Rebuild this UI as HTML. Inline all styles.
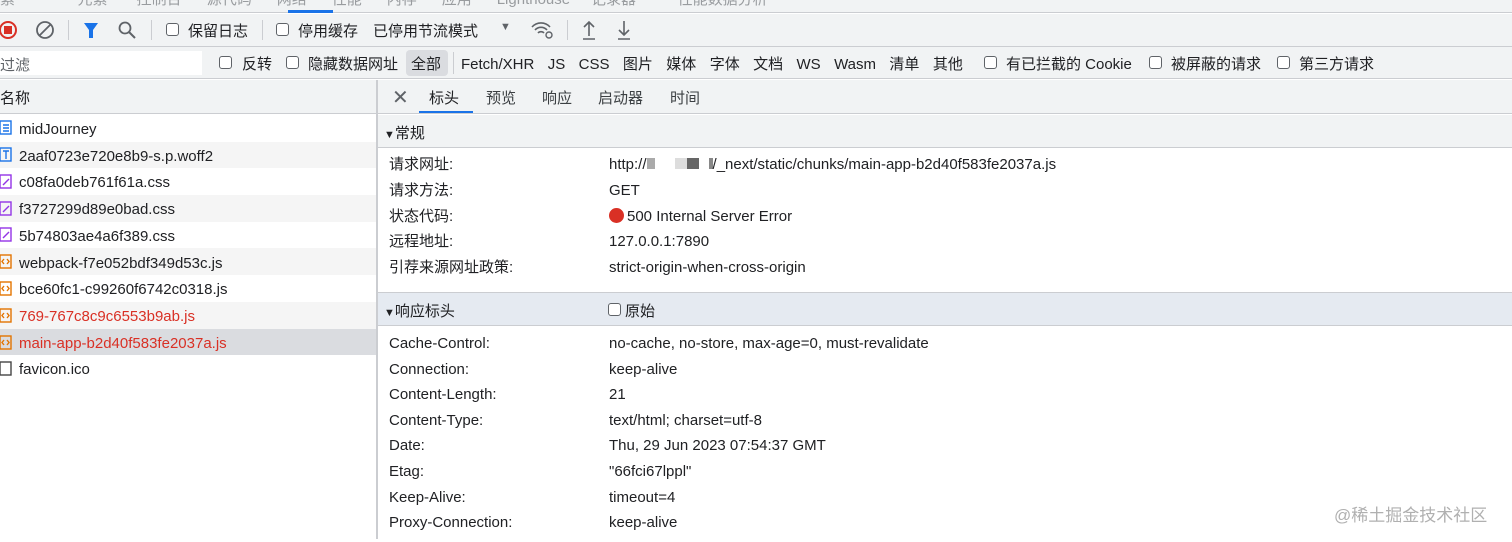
<!DOCTYPE html>
<html><head><meta charset="utf-8"><style>
*{margin:0;padding:0;box-sizing:border-box}
body{width:1512px;height:539px;overflow:hidden;background:#fff;font-family:"Liberation Sans","Noto Sans CJK SC",sans-serif;font-size:15px;color:#202124;position:relative}
.a{position:absolute;white-space:nowrap}
.cb{position:absolute;width:13px;height:13px;border:1.3px solid #5f6368;border-radius:3px;background:#fff}
.sep{position:absolute;width:1px;background:#cbcdd1}
.f span{margin-right:13.4px}
</style></head><body>
<!-- top tabs -->
<div class="a" style="left:0;top:0;width:1512px;height:13px;background:#f1f3f4;border-bottom:1px solid #cbcdd1;overflow:hidden">
<div class="a" style="left:0;top:-12px;color:#5f6368;font-size:15px;opacity:.6">素 &nbsp;&nbsp;&nbsp;&nbsp;&nbsp;&nbsp;&nbsp;&nbsp;&nbsp;&nbsp;&nbsp;&nbsp;&nbsp;&nbsp;元素 &nbsp;&nbsp;&nbsp;&nbsp;&nbsp;&nbsp;控制台 &nbsp;&nbsp;&nbsp;&nbsp;&nbsp;源代码 &nbsp;&nbsp;&nbsp;&nbsp;&nbsp;网络 &nbsp;&nbsp;&nbsp;&nbsp;&nbsp;性能 &nbsp;&nbsp;&nbsp;&nbsp;&nbsp;内存 &nbsp;&nbsp;&nbsp;&nbsp;&nbsp;应用 &nbsp;&nbsp;&nbsp;&nbsp;&nbsp;Lighthouse &nbsp;&nbsp;&nbsp;&nbsp;记录器 &nbsp;&nbsp;&nbsp;&nbsp;&nbsp;&nbsp;&nbsp;&nbsp;&nbsp;性能数据分析</div></div>
<div class="a" style="left:288px;top:10px;width:45px;height:3px;background:#1a73e8"></div>
<!-- toolbar -->
<div class="a" style="left:0;top:14px;width:1512px;height:33px;background:#f1f3f4;border-bottom:1px solid #cbcdd1"></div>
<svg class="a" style="left:0;top:19px" width="160" height="22"><circle cx="8" cy="11" r="8" fill="none" stroke="#d93025" stroke-width="2"/><rect x="4" y="7" width="8" height="8" fill="#d93025"/><circle cx="45" cy="11" r="8" fill="none" stroke="#5f6368" stroke-width="1.8"/><line x1="39" y1="17" x2="51" y2="5" stroke="#5f6368" stroke-width="1.8"/><path d="M84 4h14l-5 7v8h-4v-8z" fill="#1a73e8"/><circle cx="125" cy="9" r="5.5" fill="none" stroke="#5f6368" stroke-width="1.8"/><line x1="129" y1="13" x2="135" y2="19" stroke="#5f6368" stroke-width="2"/></svg>
<div class="sep" style="left:68px;top:20px;height:20px"></div>
<div class="sep" style="left:151px;top:20px;height:20px"></div>
<div class="cb" style="left:166px;top:23px"></div><div class="a" style="left:188px;top:20px">保留日志</div>
<div class="sep" style="left:262px;top:20px;height:20px"></div>
<div class="cb" style="left:276px;top:23px"></div><div class="a" style="left:298px;top:20px">停用缓存</div>
<div class="a" style="left:373px;top:20px">已停用节流模式</div>
<div class="a" style="left:500px;top:21px;font-size:11px;color:#5f6368">▼</div>
<svg class="a" style="left:530px;top:19px" width="120" height="22"><path d="M2 8a12 12 0 0 1 18 0M5 11a8 8 0 0 1 12 0M8 14a4 4 0 0 1 6 0" fill="none" stroke="#5f6368" stroke-width="1.6"/><circle cx="19" cy="16" r="3" fill="none" stroke="#5f6368" stroke-width="1.4"/><path d="M59 17V3M54 8l5-5 5 5M53 20h12" fill="none" stroke="#5f6368" stroke-width="1.6"/><path d="M94 2v14M89 11l5 5 5-5M88 20h12" fill="none" stroke="#5f6368" stroke-width="1.6"/></svg>
<div class="sep" style="left:567px;top:20px;height:20px"></div>
<!-- filter row -->
<div class="a" style="left:0;top:47px;width:1512px;height:32px;background:#f1f3f4;border-bottom:1px solid #cbcdd1"></div>
<div class="a" style="left:0;top:51px;width:202px;height:24px;background:#fff"></div>
<div class="a" style="left:0;top:54px;color:#5f6368">过滤</div>
<div class="cb" style="left:219px;top:56px"></div><div class="a" style="left:242px;top:53px">反转</div>
<div class="cb" style="left:286px;top:56px"></div><div class="a" style="left:308px;top:53px">隐藏数据网址</div>
<div class="a" style="left:406px;top:50px;width:42px;height:26px;background:#dadce0;border-radius:4px"></div>
<div class="a" style="left:411px;top:53px">全部</div>
<div class="sep" style="left:453px;top:52px;height:22px"></div>
<div class="a f" style="left:461px;top:53px"><span>Fetch/XHR</span><span>JS</span><span>CSS</span><span>图片</span><span>媒体</span><span>字体</span><span>文档</span><span>WS</span><span>Wasm</span><span>清单</span><span>其他</span></div>
<div class="cb" style="left:984px;top:56px"></div><div class="a" style="left:1006px;top:53px">有已拦截的 Cookie</div>
<div class="cb" style="left:1149px;top:56px"></div><div class="a" style="left:1171px;top:53px">被屏蔽的请求</div>
<div class="cb" style="left:1277px;top:56px"></div><div class="a" style="left:1299px;top:53px">第三方请求</div>
<!-- header row -->
<div class="a" style="left:0;top:80px;width:1512px;height:34px;background:#f1f3f4;border-bottom:1px solid #cbcdd1"></div>
<div class="a" style="left:0;top:87px">名称</div>
<div class="a" style="left:376px;top:80px;width:2px;height:459px;background:#cbcdd1"></div>
<div class="a" style="left:392px;top:85px;font-size:20px;color:#5f6368">✕</div>
<div class="a" style="left:429px;top:87px">标头</div>
<div class="a" style="left:419px;top:111px;width:54px;height:2px;background:#1a73e8"></div>
<div class="a" style="left:486px;top:87px;color:#3c4043">预览</div>
<div class="a" style="left:542px;top:87px;color:#3c4043">响应</div>
<div class="a" style="left:598px;top:87px;color:#3c4043">启动器</div>
<div class="a" style="left:670px;top:87px;color:#3c4043">时间</div>
<!-- list -->
<div class="a" style="left:0;top:115px;width:376px">
<div style="height:26.7px;background:#fff"></div>
<div style="height:26.7px;background:#f5f5f5"></div>
<div style="height:26.7px;background:#fff"></div>
<div style="height:26.7px;background:#f5f5f5"></div>
<div style="height:26.7px;background:#fff"></div>
<div style="height:26.7px;background:#f5f5f5"></div>
<div style="height:26.7px;background:#fff"></div>
<div style="height:26.7px;background:#f5f5f5"></div>
<div style="height:26.7px;background:#dadce0"></div>
<div style="height:26.7px;background:#fff"></div>
<div style="height:160px;background:#fff"></div>
</div>
<svg class="a" style="left:0;top:114px" width="14" height="270">
<g fill="none" stroke-width="1.4"><rect x="0" y="7" width="11" height="13" stroke="#1a73e8"/><path d="M3 11h6M3 14h6M3 17h6" stroke="#1a73e8"/>
<rect x="0" y="34" width="11" height="13" stroke="#1a73e8"/><path d="M3 37h6M6 37v8" stroke="#1a73e8"/>
<rect x="0" y="61" width="11" height="13" stroke="#9334e6"/><path d="M3 71l6-6" stroke="#9334e6"/>
<rect x="0" y="88" width="11" height="13" stroke="#9334e6"/><path d="M3 98l6-6" stroke="#9334e6"/>
<rect x="0" y="114" width="11" height="13" stroke="#9334e6"/><path d="M3 124l6-6" stroke="#9334e6"/>
<rect x="0" y="141" width="11" height="13" stroke="#e37400"/><path d="M4 145l-2 2.5 2 2.5M7 145l2 2.5-2 2.5" stroke="#e37400"/>
<rect x="0" y="168" width="11" height="13" stroke="#e37400"/><path d="M4 172l-2 2.5 2 2.5M7 172l2 2.5-2 2.5" stroke="#e37400"/>
<rect x="0" y="195" width="11" height="13" stroke="#e37400"/><path d="M4 199l-2 2.5 2 2.5M7 199l2 2.5-2 2.5" stroke="#e37400"/>
<rect x="0" y="222" width="11" height="13" stroke="#e37400"/><path d="M4 226l-2 2.5 2 2.5M7 226l2 2.5-2 2.5" stroke="#e37400"/>
<rect x="0" y="248" width="11" height="13" stroke="#444"/></g></svg>
<div class="a" style="left:19px;top:117px;line-height:26.7px">midJourney<br>2aaf0723e720e8b9-s.p.woff2<br>c08fa0deb761f61a.css<br>f3727299d89e0bad.css<br>5b74803ae4a6f389.css<br>webpack-f7e052bdf349d53c.js<br>bce60fc1-c99260f6742c0318.js<br><span style="color:#d93025">769-767c8c9c6553b9ab.js</span><br><span style="color:#d93025">main-app-b2d40f583fe2037a.js</span><br>favicon.ico</div>
<!-- right panel -->
<div class="a" style="left:378px;top:115px;width:1134px;height:33px;background:#f1f3f4;border-bottom:1px solid #cbcdd1"></div>
<div class="a" style="left:384px;top:122px"><span style="font-size:11px">▼</span>常规</div>
<div class="a" style="left:389px;top:152px;line-height:25.8px">请求网址:<br>请求方法:<br>状态代码:<br>远程地址:<br>引荐来源网址政策:</div>
<div class="a" style="left:609px;top:152px;line-height:25.8px">http://<span style="display:inline-block;width:8px;height:11px;background:#aaa"></span><span style="display:inline-block;width:20px"></span><span style="display:inline-block;width:12px;height:11px;background:#ddd"></span><span style="display:inline-block;width:12px;height:11px;background:#666"></span><span style="display:inline-block;width:10px"></span><span style="display:inline-block;width:4px;height:11px;background:#888"></span>/_next/static/chunks/main-app-b2d40f583fe2037a.js<br>GET<br><span style="display:inline-block;width:15px;height:15px;border-radius:50%;background:#d93025;vertical-align:-2px;margin-right:3px"></span>500 Internal Server Error<br>127.0.0.1:7890<br>strict-origin-when-cross-origin</div>
<div class="a" style="left:378px;top:292px;width:1134px;height:34px;background:#e5eaf1;border-top:1px solid #cbcdd1;border-bottom:1px solid #cbcdd1"></div>
<div class="a" style="left:384px;top:300px"><span style="font-size:11px">▼</span>响应标头</div>
<div class="cb" style="left:608px;top:303px"></div><div class="a" style="left:625px;top:300px">原始</div>
<div class="a" style="left:389px;top:331px;line-height:25.6px">Cache-Control:<br>Connection:<br>Content-Length:<br>Content-Type:<br>Date:<br>Etag:<br>Keep-Alive:<br>Proxy-Connection:</div>
<div class="a" style="left:609px;top:331px;line-height:25.6px">no-cache, no-store, max-age=0, must-revalidate<br>keep-alive<br>21<br>text/html; charset=utf-8<br>Thu, 29 Jun 2023 07:54:37 GMT<br>"66fci67lppl"<br>timeout=4<br>keep-alive</div>
<div class="a" style="left:1334px;top:501px;color:#b0b0b0;font-size:17px">@稀土掘金技术社区</div>
</body></html>
